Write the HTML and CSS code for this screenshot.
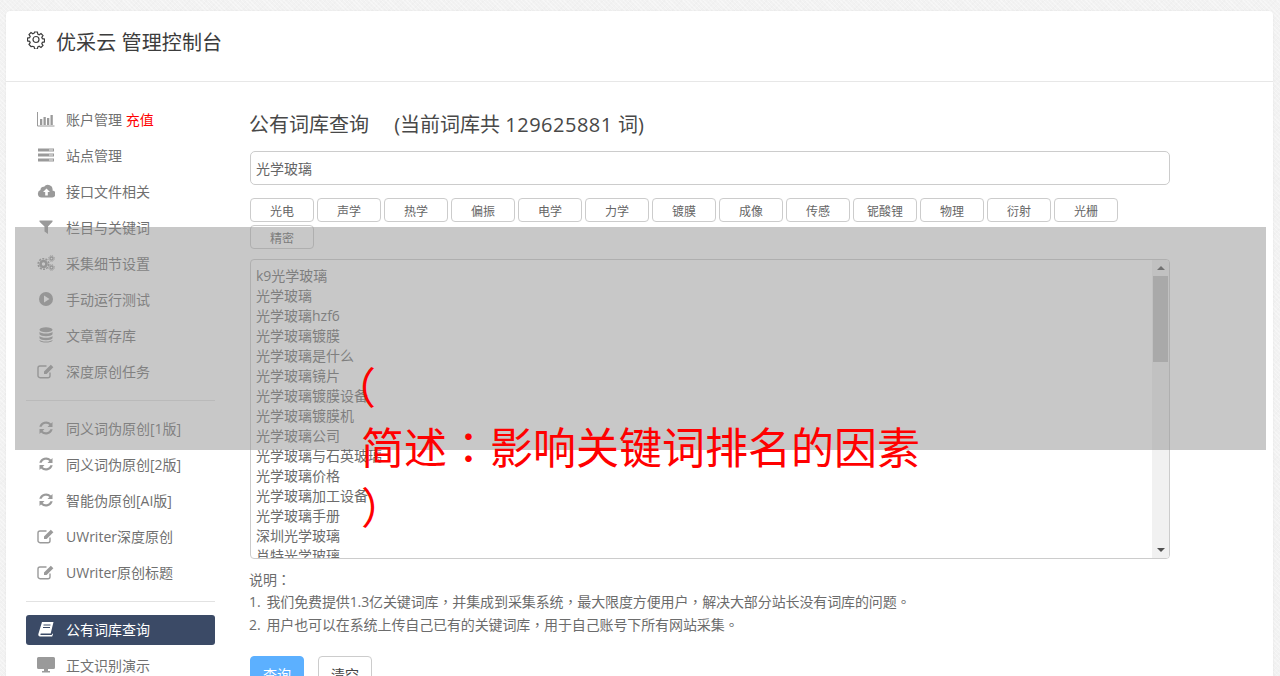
FILE: index.html
```html
<!DOCTYPE html>
<html lang="zh-CN">
<head>
<meta charset="utf-8">
<title>优采云 管理控制台</title>
<link rel="stylesheet" href="styles.css">
</head>
<body>
<svg class="defs" width="0" height="0" aria-hidden="true">
  <defs>
    <symbol id="i-edit" viewBox="0 0 18 16"><path d="M13 9.500v3.200a2 2 0 0 1-2 2H3a2 2 0 0 1-2-2V5a2 2 0 0 1 2-2h6.500" fill="none" stroke="currentColor" stroke-width="1.400"/><path d="M7 8.500 13.800 1.700l2.600 2.600-6.800 6.800H7z" fill="currentColor"/></symbol>
    <symbol id="i-sync" viewBox="0 0 16 16"><path d="M14.500 2v5h-5l1.900-1.900A4.700 4.700 0 0 0 3.600 6.800H1.300A7 7 0 0 1 13 3.500zM1.500 14V9h5l-1.900 1.900a4.700 4.700 0 0 0 7.800-1.700h2.300A7 7 0 0 1 3 12.500z" fill="currentColor"/></symbol>
  </defs>
</svg>
<div class="card">
  <header class="head">
    <svg class="gear" viewBox="0 0 18 18"><path d="M7.600 1h2.800l.4 2.100 1.400.6 1.800-1.200 2 2-1.200 1.800.6 1.400 2.100.4v2.800l-2.100.4-.6 1.400 1.200 1.800-2 2-1.800-1.200-1.400.6-.4 2.100H7.600l-.4-2.100-1.400-.6L4 15.500l-2-2 1.200-1.800-.6-1.400L.5 9.900V7.100l2.100-.4.6-1.400L2 3.500l2-2 1.800 1.200 1.400-.6z" fill="none" stroke="currentColor" stroke-width="1.200"/><circle cx="9" cy="8.500" r="3" fill="none" stroke="currentColor" stroke-width="1.200"/></svg>
    <h1 class="brand">优采云 管理控制台</h1>
  </header>
  <div class="body">
    <nav class="side">
      <a class="item"><svg class="ico" viewBox="0 0 18 16"><path d="M.5 1v14h17" fill="none" stroke="currentColor"/><path d="M3 8h2.300v6H3zM6.500 6h2.300v8H6.500zM10 7h2.300v7H10zM13.500 4h2.300v10h-2.300z" fill="currentColor"/></svg><span>账户管理 <em class="red">充值</em></span></a>
      <a class="item"><svg class="ico" viewBox="0 0 18 16"><path d="M1 1.500h16v3H1zM1 6.500h16v3H1zM1 11.500h16v3H1z" fill="currentColor"/><path d="M12 3h4M12 8h4M12 13h4" stroke="#fff" stroke-width=".8"/></svg><span>站点管理</span></a>
      <a class="item"><svg class="ico" viewBox="0 0 18 16"><path d="M4.500 14.500a3.800 3.800 0 0 1-1-7.400 3 3 0 0 1 3.600-3.300 4.700 4.700 0 0 1 8.400 3.700 3.500 3.500 0 0 1-1 7z" fill="currentColor"/><path d="M9.500 5.500 6 9h2.200v3.500h2.600V9H13z" fill="#fff"/></svg><span>接口文件相关</span></a>
      <a class="item"><svg class="ico" viewBox="0 0 18 16"><path d="M2.500 1.500h13v1.200L11 7.500v7.500L7.500 12.500v-5L2.500 2.700z" fill="currentColor"/></svg><span>栏目与关键词</span></a>
      <a class="item"><svg class="ico" viewBox="0 0 18 16"><circle cx="6.500" cy="9" r="3" fill="none" stroke="currentColor" stroke-width="2.600"/><circle cx="6.500" cy="9" r="5.300" fill="none" stroke="currentColor" stroke-width="1.600" stroke-dasharray="2 1.300"/><circle cx="14.500" cy="3.500" r="1.500" fill="none" stroke="currentColor" stroke-width="1.300"/><circle cx="14.500" cy="3.500" r="2.800" fill="none" stroke="currentColor" stroke-width="1" stroke-dasharray="1.200 1"/><circle cx="14.500" cy="12.500" r="1.500" fill="none" stroke="currentColor" stroke-width="1.300"/><circle cx="14.500" cy="12.500" r="2.800" fill="none" stroke="currentColor" stroke-width="1" stroke-dasharray="1.200 1"/></svg><span>采集细节设置</span></a>
      <a class="item"><svg class="ico" viewBox="0 0 18 16"><circle cx="9" cy="8" r="7" fill="currentColor"/><path d="M7 4.500 12.500 8 7 11.500z" fill="#fff"/></svg><span>手动运行测试</span></a>
      <a class="item"><svg class="ico" viewBox="0 0 18 16"><ellipse cx="9" cy="2.800" rx="6.500" ry="2.500" fill="currentColor"/><path d="M2.500 4.800c1 2.400 12 2.400 13 0v2.400c-1 2.600-12 2.600-13 0zM2.500 8.900c1 2.400 12 2.400 13 0v2.400c-1 2.600-12 2.600-13 0zM2.500 12.700c1 2.400 12 2.400 13 0v.8c-1 2.800-12 2.800-13 0z" fill="currentColor"/></svg><span>文章暂存库</span></a>
      <a class="item"><svg class="ico"><use href="#i-edit"/></svg><span>深度原创任务</span></a>
      <hr class="rule">
      <a class="item"><svg class="ico"><use href="#i-sync"/></svg><span>同义词伪原创[1版]</span></a>
      <a class="item"><svg class="ico"><use href="#i-sync"/></svg><span>同义词伪原创[2版]</span></a>
      <a class="item"><svg class="ico"><use href="#i-sync"/></svg><span>智能伪原创[AI版]</span></a>
      <a class="item"><svg class="ico"><use href="#i-edit"/></svg><span>UWriter深度原创</span></a>
      <a class="item"><svg class="ico"><use href="#i-edit"/></svg><span>UWriter原创标题</span></a>
      <hr class="rule rule-b">
      <a class="item active"><svg class="ico" viewBox="0 0 18 16"><path d="M5 1h11.500l-2.800 11.500H4.200c-1.200 0-1.200 1.500 0 1.500h10.500l.5-1.500.8.600-.8 2.400H3.300C1.300 15.500 1 14 1.500 12.500z" fill="currentColor"/><path d="M6.500 4h7M6 6.500h7" stroke="#3b4a66"/></svg><span>公有词库查询</span></a>
      <a class="item"><svg class="ico" viewBox="0 0 18 16"><path d="M1.500 0h15A1.500 1.500 0 0 1 18 1.500v9a1.500 1.500 0 0 1-1.500 1.500H11v2h2v1.500H5V14h2v-2H1.500A1.500 1.500 0 0 1 0 10.500v-9A1.500 1.500 0 0 1 1.500 0z" fill="currentColor"/></svg><span>正文识别演示</span></a>
    </nav>
    <main class="main">
      <h2 class="title">公有词库查询 <span class="count">(当前词库共 <span class="num">129625881</span> 词)</span></h2>
      <div class="field">光学玻璃</div>
      <div class="tags">
        <span class="tag">光电</span><span class="tag">声学</span><span class="tag">热学</span><span class="tag">偏振</span><span class="tag">电学</span><span class="tag">力学</span><span class="tag">镀膜</span><span class="tag">成像</span><span class="tag">传感</span><span class="tag">铌酸锂</span><span class="tag">物理</span><span class="tag">衍射</span><span class="tag">光栅</span><span class="tag">精密</span>
      </div>
      <div class="result">
        <div class="lines">
          <div>k9光学玻璃</div><div>光学玻璃</div><div>光学玻璃hzf6</div><div>光学玻璃镀膜</div><div>光学玻璃是什么</div><div>光学玻璃镜片</div><div>光学玻璃镀膜设备</div><div>光学玻璃镀膜机</div><div>光学玻璃公司</div><div>光学玻璃与石英玻璃</div><div>光学玻璃价格</div><div>光学玻璃加工设备</div><div>光学玻璃手册</div><div>深圳光学玻璃</div><div>肖特光学玻璃</div>
        </div>
        <div class="bar">
          <span class="arrow up"></span>
          <span class="track"><span class="thumb"></span></span>
          <span class="arrow down"></span>
        </div>
      </div>
      <div class="notes">
        <p class="note-a">说明<span class="punct" lang="zh-TW">：</span></p>
        <p class="note-b">1. 我们免费提供1.3亿关键词库<span class="punct" lang="zh-TW">，</span>并集成到采集系统<span class="punct" lang="zh-TW">，</span>最大限度方便用户<span class="punct" lang="zh-TW">，</span>解决大部分站长没有词库的问题<span class="punct" lang="zh-TW">。</span></p>
        <p class="note-c">2. 用户也可以在系统上传自己已有的关键词库<span class="punct" lang="zh-TW">，</span>用于自己账号下所有网站采集<span class="punct" lang="zh-TW">。</span></p>
      </div>
      <div class="actions">
        <button class="btn primary">查询</button>
        <button class="btn plain">清空</button>
      </div>
    </main>
  </div>
</div>
<div class="overlay">
  <div class="slogan">
    <div class="open">（</div>
    <div>简述<span class="punct" lang="zh-TW">：</span>影响关键词排名的因素</div>
    <div>）</div>
  </div>
</div>
</body>
</html>
```

FILE: styles.css
```css
* { box-sizing: border-box; }
html, body { height: 676px; overflow: hidden; }
body {
  margin: 0;
  padding: 11px 7px 0 6px;
  background-color: #f2f2f2;
  background-image:
    repeating-linear-gradient(45deg, rgba(255,255,255,.35) 0 1px, transparent 1px 3px),
    repeating-linear-gradient(-45deg, rgba(0,0,0,.012) 0 1px, transparent 1px 4px);
  font-family: "Open Sans", "Noto Sans CJK SC", sans-serif;
  font-size: 14px;
  color: #707070;
}
.defs { position: absolute; }
.card {
  background: #fff;
  border-radius: 4px;
  height: 760px;
  box-shadow: 0 0 2px rgba(0, 0, 0, .08);
}
.head {
  height: 71px;
  border-bottom: 1px solid #e7e7e7;
  display: flex;
  align-items: center;
  padding: 0 0 8px 21px;
  gap: 11px;
  color: #3c3c3c;
}
.gear { width: 18px; height: 18px; margin-top: -4px; }
.brand { margin: 0; padding-top: 2px; font-size: 20px; font-weight: 400; line-height: 28px; letter-spacing: .1px; }
.body { display: flex; }
.side { width: 209px; margin-left: 20px; padding-top: 19px; flex: none; display: flex; flex-direction: column; }
.item {
  display: flex;
  align-items: center;
  width: 189px;
  height: 36px;
  padding-left: 11px;
  gap: 11px;
  color: #707070;
  flex: none;
}
.ico { width: 18px; height: 16px; color: #9a9a9a; flex: none; }
.red { color: #f00; font-style: normal; }
.rule { width: 189px; margin: 11px 0 9px; border: 0; border-top: 1px solid #e2e2e2; flex: none; }
.rule-b { margin: 11px 0 13px; }
.item.active {
  height: 30px;
  padding-bottom: 2px;
  margin-bottom: 2px;
  background: #3b4a66;
  color: #fff;
  border-radius: 3px;
}
.item.active .ico { color: #fff; }
.main { width: 920px; margin-left: 15px; padding-top: 26px; flex: none; }
.title { margin: 0 0 0 -1px; font-size: 20px; font-weight: 400; line-height: 34px; color: #484848; white-space: pre; }
.count { margin-left: 20px; }
.num { letter-spacing: .5px; }
.field {
  margin-top: 9px;
  height: 34px;
  border: 1px solid #ccc;
  border-radius: 5px;
  padding-left: 5px;
  line-height: 33px;
  font-size: 14px;
  color: #666;
}
.tags { display: flex; flex-wrap: wrap; gap: 3px; margin-top: 13px; }
.tag {
  width: 64px;
  height: 24px;
  border: 1px solid #ccc;
  border-radius: 4px;
  font-size: 12px;
  line-height: 25px;
  text-align: center;
  color: #666;
}
.result {
  margin-top: 10px;
  height: 300px;
  border: 1px solid #ccc;
  border-radius: 4px;
  display: flex;
  overflow: hidden;
}
.lines { flex: 1; padding: 6px 0 0 5px; overflow: hidden; line-height: 20px; font-size: 14px; color: #6c6c6c; }
.bar { width: 17px; background: #f1f1f1; display: flex; flex-direction: column; align-items: center; }
.arrow { flex: none; width: 0; height: 0; border-left: 4px solid transparent; border-right: 4px solid transparent; }
.arrow.up { border-bottom: 4px solid #505050; margin: 6px 0 6px; }
.arrow.down { border-top: 4px solid #505050; margin: 6px 0 6px; }
.track { flex: 1; width: 100%; padding: 0 1px; }
.thumb { display: block; height: 86px; background: #c1c1c1; }
.notes { margin-top: 10px; line-height: 22px; color: #6c6c6c; letter-spacing: -.12px; word-spacing: 2.5px; }
.notes p { margin: 0 0 0 -1px; }
.notes .note-c { margin-top: 1px; }
.punct { font-family: "Noto Sans CJK TC", sans-serif; line-height: 0; }
.actions { display: flex; gap: 14px; margin-top: 20px; }
.btn { width: 54px; height: 36px; border-radius: 4px; font: inherit; padding: 0; }
.primary { background: #5cb0ff; border: 1px solid #5cb0ff; color: #fff; }
.plain { background: #fff; border: 1px solid #ccc; color: #444; }
.overlay {
  position: absolute;
  left: 15px;
  top: 227px;
  width: 1251px;
  height: 223px;
  background: rgba(145, 145, 145, .5);
  display: flex;
  justify-content: center;
  padding-top: 131px;
}
.slogan { width: 559px; height: 180px; font-size: 43px; line-height: 60px; color: #f00; white-space: nowrap; }
.open { font-feature-settings: "palt"; margin-left: -8px; }
```
